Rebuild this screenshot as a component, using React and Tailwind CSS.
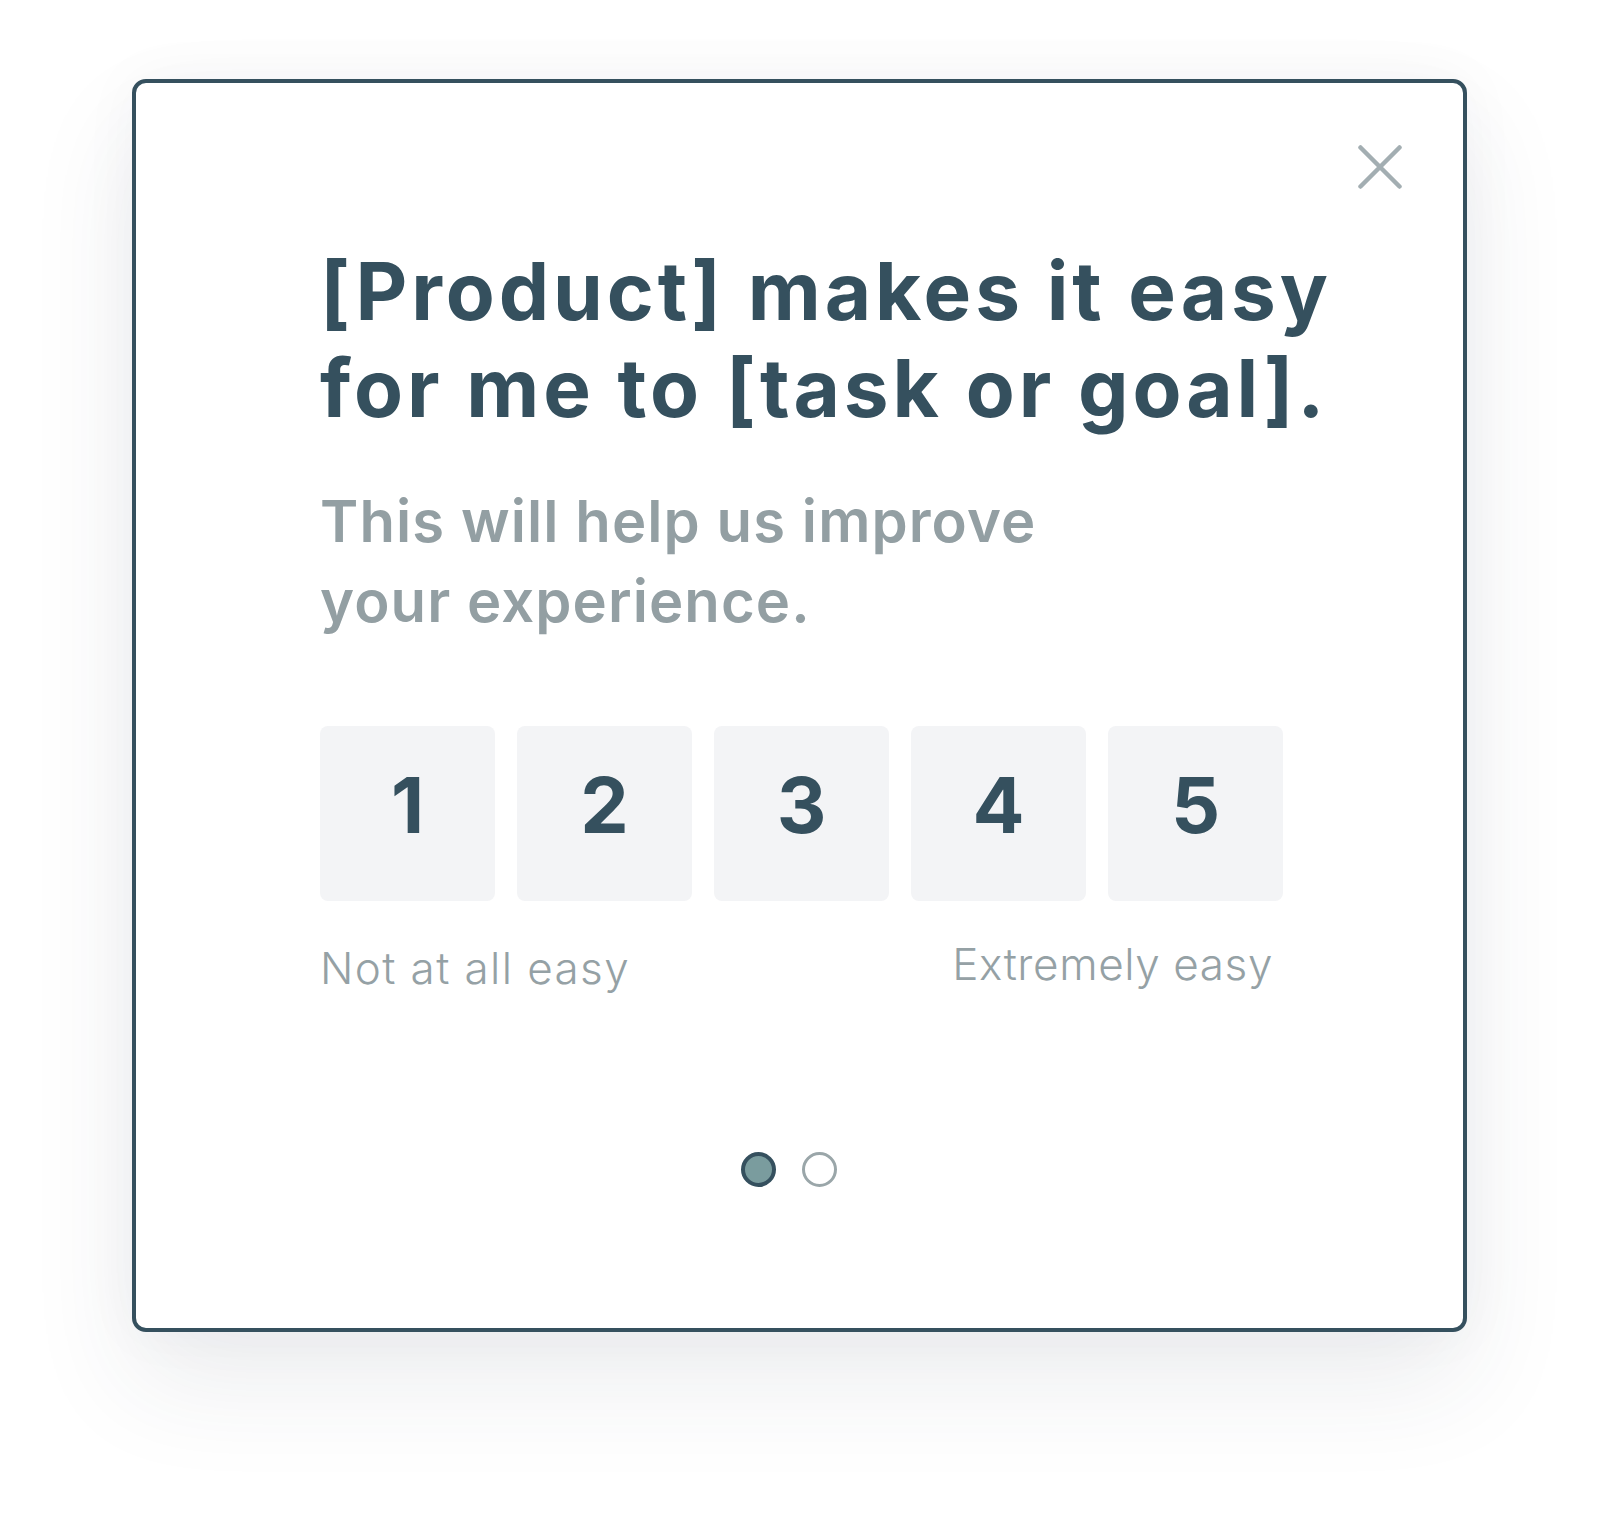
import { useState } from "react";

const SCORES = [1, 2, 3, 4, 5];

const CloseIcon = () => (
  <svg width="44" height="44" viewBox="0 0 44 44" fill="none">
    <path
      d="M2.5 2.5L41.5 41.5M41.5 2.5L2.5 41.5"
      stroke="#a3aeb2"
      strokeWidth="4.5"
      strokeLinecap="round"
    />
  </svg>
);

const SurveyCard = () => {
  const [score, setScore] = useState(null);

  return (
    <div className="relative w-[1335px] h-[1253px] bg-white border-4 border-[#35505e] rounded-[14px] shadow-[0_50px_110px_rgba(40,55,75,0.09),0_0_60px_rgba(40,55,75,0.04)] pt-[159px] pl-[184px]">
      {/* close */}
      <button className="absolute top-[62px] right-[61px]">
        <CloseIcon />
      </button>

      <h1 className="text-[80px] leading-[97px] font-bold text-[#35505e] tracking-[3.9px]">
        [Product] makes it easy
        <br />
        for me to [task or goal].
      </h1>

      <p className="mt-[45px] text-[58px] leading-[80px] font-semibold text-[#939fa3] tracking-[1.1px]">
        This will help us improve
        <br />
        your experience.
      </p>

      {/* rating scale */}
      <div className="mt-[85px] flex gap-[22px]">
        {SCORES.map((n) => (
          <button
            key={n}
            onClick={() => setScore(n)}
            className={`w-[175px] h-[175px] rounded-lg flex items-center justify-center pb-4 text-[77px] font-bold text-[#35505e] ${
              score === n ? "bg-[#e3e8ea]" : "bg-[#f3f4f6]"
            }`}
          >
            {n}
          </button>
        ))}
      </div>

      <div className="mt-[40px] w-[963px] pr-[10px] flex justify-between items-start text-[44px] leading-[54px] font-light text-[#95a1a5]">
        <span className="tracking-[1.4px]">Not at all easy</span>
        <span className="-mt-1 tracking-[0.6px]">Extremely easy</span>
      </div>

      {/* pager */}
      <div className="mt-[157px] w-[963px] flex justify-center gap-[26px] pr-[26px]">
        <span className="w-[35px] h-[35px] rounded-full bg-[#7a9c9e] border-4 border-[#35505e]" />
        <span className="w-[35px] h-[35px] rounded-full bg-white border-[3.5px] border-[#9aa6a9]" />
      </div>
    </div>
  );
};

export default function App() {
  return (
    <div
      className="min-h-[1517px] bg-white pt-[79px] pl-[132px]"
      style={{ fontFamily: "Inter, 'Noto Sans', sans-serif" }}
    >
      <SurveyCard />
    </div>
  );
}
